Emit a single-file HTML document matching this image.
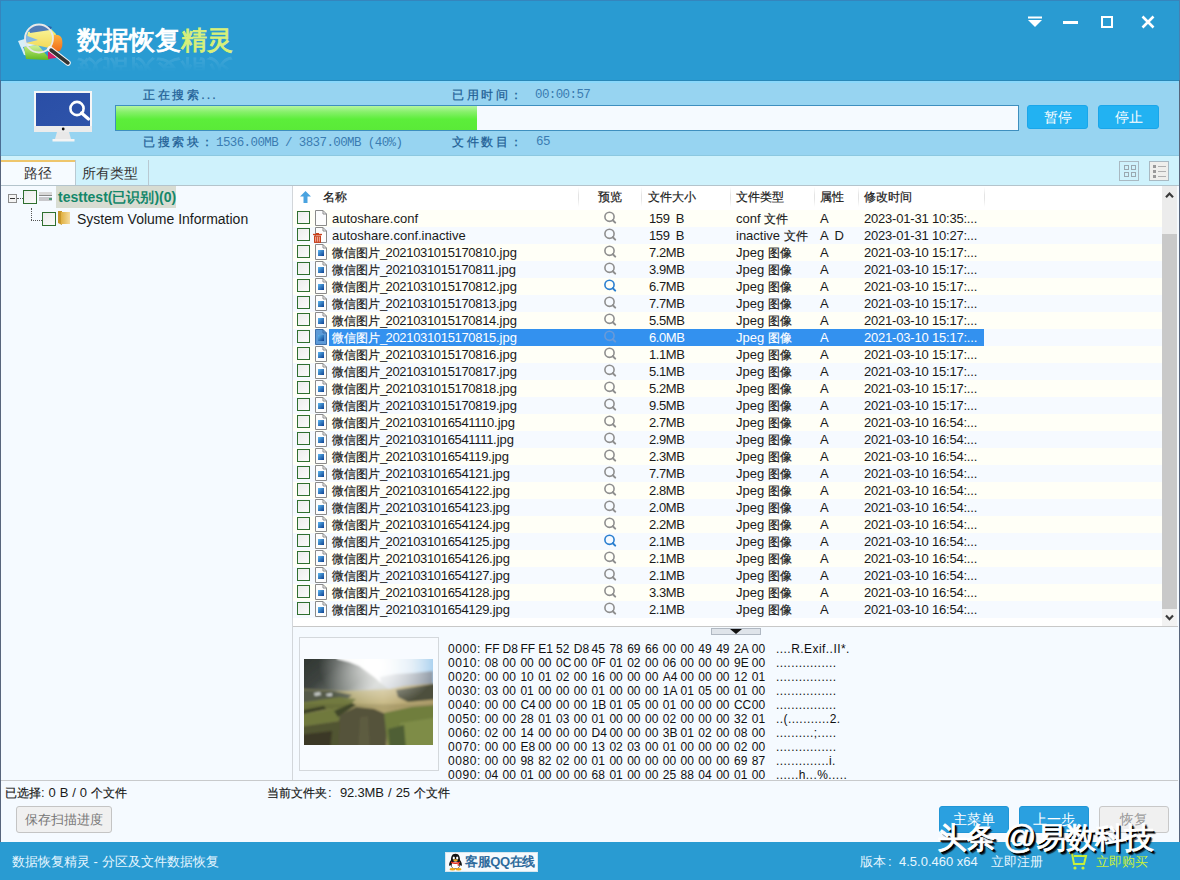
<!DOCTYPE html><html><head><meta charset="utf-8"><style>
*{margin:0;padding:0;box-sizing:border-box}
html,body{width:1180px;height:880px;overflow:hidden;background:#f5faff}
body{position:relative;font-family:"Liberation Sans",sans-serif;color:#1a1a1a}
.ab{position:absolute}
.t{position:absolute;white-space:pre;line-height:17px}
.chk{position:absolute;width:13px;height:13px;border:1px solid #2f6f2f;background:linear-gradient(135deg,#ececec,#fbfbfb)}
.c{font-size:12px;-webkit-text-stroke:0.2px currentColor}
.row{position:absolute;left:293px;width:869px;height:17px}
.cell{position:absolute;top:0;white-space:pre;font-size:13px;line-height:17px}
.hdr{position:absolute;top:0;white-space:pre;font-size:13px;line-height:22px;color:#1a1a1a}
.sep{position:absolute;top:1px;width:1px;height:20px;background:linear-gradient(#fff,#e4e4e4 40%,#e4e4e4 60%,#fff)}
.serif{font-family:"Liberation Serif",serif;color:#1f5f96;font-size:12px;letter-spacing:2.6px;-webkit-text-stroke:0.25px #1f5f96}
.btnb{position:absolute;background:#22b2f2;border:1px solid #1aa6ea;border-radius:3px;color:#fff;font-size:14px;text-align:center}
.hb{display:inline-block;width:17.8px}
.hex{position:absolute;left:448px;white-space:pre;font-size:12px;line-height:14px;color:#101010}
</style></head><body>
<div class="ab" style="left:0;top:0;width:1180px;height:80px;background:#299bd2"></div>
<div class="ab" style="left:0;top:80px;width:1180px;height:76px;background:#97d4f1;border-bottom:1px solid #8cc8e0"></div>
<div class="ab" style="left:0;top:80px;width:1180px;height:1px;background:#2a88b8"></div>
<div class="ab" style="left:0;top:81px;width:1180px;height:2px;background:#8ad8fb"></div>
<div class="ab" style="left:0;top:156px;width:1180px;height:30px;background:#cff2fc;border-bottom:1px solid #b4c4cc"></div>
<div class="ab" style="left:0;top:0;width:1180px;height:1px;background:#3585bd"></div>
<div class="ab" style="left:0;top:0;width:1px;height:80px;background:#3585bd"></div>
<div class="ab" style="left:0;top:80px;width:1px;height:76px;background:#4a6e94"></div>
<div class="ab" style="left:0;top:156px;width:1px;height:686px;background:#58657c"></div>
<div class="ab" style="left:0;top:842px;width:1px;height:38px;background:#3585bd"></div>
<div class="ab" style="left:1179px;top:0;width:1px;height:80px;background:#4a7fb0"></div>
<div class="ab" style="left:1179px;top:80px;width:1px;height:762px;background:#58657c"></div>
<div class="ab" style="left:1179px;top:842px;width:1px;height:38px;background:#3a88c0"></div>
<svg class="ab" style="left:10px;top:15px" width="70" height="60" viewBox="0 0 70 60">
<defs>
<linearGradient id="lg1" x1="0" y1="0" x2="0" y2="1"><stop offset="0" stop-color="#f8f080"/><stop offset="1" stop-color="#f0d030"/></linearGradient>
<linearGradient id="lg2" x1="0" y1="0" x2="0" y2="1"><stop offset="0" stop-color="#c8f080"/><stop offset="1" stop-color="#60b820"/></linearGradient>
<linearGradient id="lg3" x1="0" y1="0" x2="0" y2="1"><stop offset="0" stop-color="#ffb040"/><stop offset="1" stop-color="#f06818"/></linearGradient>
</defs>
<path d="M8 26 L28 20 L26 42 L14 40 Z" fill="#d8eef8"/>
<path d="M13 32 L28 30 L40 44 L36 44 L18 44 Z" fill="#3a8ac8"/>
<path d="M14 32 L28 30 L40 44 L38 45 L16 44 Z" fill="url(#lg2)"/>
<path d="M18 17 L41 14 L46 19 L44 34 L30 31 L16 28 Z" fill="url(#lg1)"/><path d="M15 20 L28 25 L16 28 Z" fill="#6aa8e0"/>
<path d="M19 12 Q30 8 42 12 L40 15 L20 18Z" fill="#2a5ea8"/>
<path d="M44 20 Q50 19 52 24 Q53.5 31 50 36 L44 37 L41 30 Z" fill="url(#lg3)"/>
<path d="M38 37 L46 36 L46 43 L38 44 Z" fill="#d0206a"/>
<circle cx="29" cy="23.5" r="14" fill="#ffffff" fill-opacity="0.18" stroke="#e8e8e8" stroke-width="1.8"/>
<path d="M40 34 L58 48" stroke="#f4f4f4" stroke-width="5.5" stroke-linecap="round"/>
<path d="M41 35 L58 48" stroke="#333" stroke-width="3.5" stroke-linecap="round"/>
</svg>
<div class="ab" style="left:77px;top:25px;font-size:26px;line-height:30px;font-weight:normal;color:#fff;-webkit-text-stroke:0.9px #fff;white-space:pre">数据恢复<span style="color:#d8f07a;-webkit-text-stroke:0.9px #d8f07a">精灵</span></div>
<div class="ab" style="left:77px;top:25px;width:160px;height:30px;transform:scaleY(-1);transform-origin:0 30px;overflow:hidden;font-size:26px;line-height:30px;font-weight:normal;-webkit-text-stroke:0.9px #fff;color:#fff;white-space:pre;opacity:0.12;-webkit-mask-image:linear-gradient(to top,rgba(0,0,0,1) 0%,rgba(0,0,0,0) 55%)">数据恢复精灵</div>
<svg class="ab" style="left:1025px;top:14px" width="20" height="16" viewBox="0 0 20 16"><path d="M3 3.5H17" stroke="#fff" stroke-width="2"/><path d="M3 6H17L10 13Z" fill="#fff"/></svg>
<div class="ab" style="left:1063px;top:21px;width:15px;height:3px;background:#fff"></div>
<div class="ab" style="left:1101px;top:16px;width:12px;height:12px;border:2px solid #fff"></div>
<svg class="ab" style="left:1141px;top:15px" width="14" height="14" viewBox="0 0 14 14"><path d="M1.5 1.5L12.5 12.5M12.5 1.5L1.5 12.5" stroke="#fff" stroke-width="2.6"/></svg>
<svg class="ab" style="left:30px;top:88px" width="66" height="56" viewBox="0 0 66 56">
<defs><linearGradient id="scr" x1="0" y1="0" x2="1" y2="1"><stop offset="0" stop-color="#2a4ea6"/><stop offset="1" stop-color="#2e54aa"/></linearGradient></defs>
<rect x="4" y="3" width="58" height="41" fill="#f6f6f6"/>
<rect x="6" y="5" width="54" height="33" fill="url(#scr)"/>
<rect x="4" y="38" width="58" height="6" fill="#ececec"/>
<circle cx="33.2" cy="41" r="1.4" fill="#111"/>
<path d="M27 44 H39 L41 51 H25Z" fill="#e8e8e8"/>
<rect x="22.5" y="51" width="22" height="2.5" fill="#f4f4f4"/>
<circle cx="47" cy="20.5" r="6.6" fill="none" stroke="#fff" stroke-width="2.6"/>
<path d="M51.5 25 L58.5 31" stroke="#fff" stroke-width="3.2" stroke-linecap="round"/>
</svg>
<div class="t serif" style="left:143px;top:87px">正在搜索...</div>
<div class="t serif" style="left:452px;top:87px">已用时间：</div>
<div class="t serif" style="left:535px;top:87px;letter-spacing:0;font-family:Liberation Mono,monospace;font-size:12.5px;letter-spacing:-0.6px;-webkit-text-stroke:0;color:#3a7cb2">00:00:57</div>
<div class="t serif" style="left:143px;top:134px">已搜索块：<span style="letter-spacing:0;font-family:Liberation Mono,monospace;font-size:12.5px;letter-spacing:-0.6px;-webkit-text-stroke:0;color:#3a7cb2">1536.00MB / 3837.00MB (40%)</span></div>
<div class="t serif" style="left:452px;top:134px">文件数目：</div>
<div class="t serif" style="left:536px;top:134px;letter-spacing:0;font-family:Liberation Mono,monospace;font-size:12.5px;letter-spacing:-0.6px;-webkit-text-stroke:0;color:#3a7cb2">65</div>
<div class="ab" style="left:115px;top:105px;width:904px;height:26px;background:#f5faff;border:1px solid #3e8fbf"></div>
<div class="ab" style="left:116px;top:106px;width:361px;height:24px;background:linear-gradient(#b4f5a0 0%,#86f06a 25%,#5cee3a 55%,#5aea38 100%)"></div>
<div class="btnb" style="left:1027px;top:105px;width:61px;height:24px;line-height:22px">暂停</div>
<div class="btnb" style="left:1098px;top:105px;width:61px;height:24px;line-height:22px">停止</div>
<div class="ab" style="left:1px;top:160px;width:74px;height:25px;background:#f6fbff;border-top:2px solid #eec66c"></div>
<div class="ab" style="left:75px;top:160px;width:1px;height:25px;background:#b9c9d2"></div>
<div class="ab" style="left:148px;top:160px;width:1px;height:25px;background:#b9c9d2"></div>
<div class="t" style="left:24px;top:163px;font-size:14px;line-height:20px;color:#333">路径</div>
<div class="t" style="left:82px;top:163px;font-size:14px;line-height:20px;color:#333">所有类型</div>
<svg class="ab" style="left:1119px;top:161px" width="22" height="21" viewBox="0 0 22 21"><rect x="0.5" y="0.5" width="19" height="19" fill="none" stroke="#a9b9c2"/><g fill="none" stroke="#9aa8b0"><rect x="5.5" y="4.5" width="4" height="4"/><rect x="12.5" y="4.5" width="4" height="4"/><rect x="5.5" y="11.5" width="4" height="4"/><rect x="12.5" y="11.5" width="4" height="4"/></g></svg>
<svg class="ab" style="left:1149px;top:161px" width="22" height="21" viewBox="0 0 22 21"><rect x="0.5" y="0.5" width="19" height="19" fill="#efefec" stroke="#a9b9c2"/><g fill="#9a9a9a"><rect x="4" y="4" width="3" height="3"/><rect x="4" y="9" width="3" height="3"/><rect x="4" y="14" width="3" height="3"/></g><g stroke="#b0b0b0"><path d="M9 5.5H17M9 10.5H17M9 15.5H17"/></g></svg>
<div class="ab" style="left:292px;top:186px;width:1px;height:595px;background:#d2d6da"></div>
<div class="ab" style="left:8px;top:194px;width:9px;height:9px;border:1px solid #8c8c8c;background:#f4f4f4"></div>
<div class="ab" style="left:10px;top:198px;width:5px;height:1px;background:#333"></div>
<div class="ab" style="left:17px;top:198px;width:6px;height:1px;border-top:1px dotted #555"></div>
<div class="chk" style="left:23px;top:190px;width:14px;height:14px"></div>
<svg class="ab" style="left:38px;top:190px" width="16" height="14" viewBox="0 0 16 14"><rect x="1" y="2" width="13" height="3" fill="#d8d8d8"/><rect x="1" y="7" width="13" height="4" fill="#c8c8cc"/><path d="M1 5.5H14" stroke="#888"/><path d="M14 9H11" stroke="#2a8a5a" stroke-width="1.5"/></svg>
<div class="ab" style="left:56px;top:186px;width:120px;height:22px;background:#d8dcd2"></div>
<div class="t" style="left:58px;top:187px;font-size:14px;line-height:20px;font-weight:bold;color:#14876a">testtest(已识别)(0)</div>
<div class="ab" style="left:31px;top:208px;width:1px;height:12px;border-left:1px dotted #555"></div>
<div class="ab" style="left:31px;top:220px;width:11px;height:1px;border-top:1px dotted #555"></div>
<div class="chk" style="left:42px;top:212px;width:14px;height:14px"></div>
<svg class="ab" style="left:57px;top:210px" width="14" height="16" viewBox="0 0 14 16"><defs><linearGradient id="fd" x1="0" x2="1"><stop offset="0" stop-color="#e0b040"/><stop offset="1" stop-color="#f5dca0"/></linearGradient></defs><path d="M1 1H5L5 15L1 13Z" fill="#c8962a"/><rect x="4" y="2" width="9" height="12" fill="url(#fd)"/></svg>
<div class="t" style="left:77px;top:209px;font-size:14px;line-height:20px;color:#1a1a1a">System Volume Information</div>
<div class="ab" style="left:293px;top:186px;width:869px;height:440px;background:#fff"></div>
<div class="ab" style="left:293px;top:186px;width:869px;height:22px;background:#fff">
<svg class="ab" style="left:7px;top:5px" width="11" height="12" viewBox="0 0 11 12"><path d="M5.5 0L11 5.5H7.5V12H3.5V5.5H0Z" fill="#4aa3e0"/></svg>
<div class="hdr" style="left:30px"><span class="c">名称</span></div>
<div class="hdr" style="left:305px"><span class="c">预览</span></div>
<div class="hdr" style="left:355px"><span class="c">文件大小</span></div>
<div class="hdr" style="left:443px"><span class="c">文件类型</span></div>
<div class="hdr" style="left:527px"><span class="c">属性</span></div>
<div class="hdr" style="left:571px"><span class="c">修改时间</span></div>
<div class="sep" style="left:285px"></div>
<div class="sep" style="left:348px"></div>
<div class="sep" style="left:437px"></div>
<div class="sep" style="left:521px"></div>
<div class="sep" style="left:565px"></div>
<div class="sep" style="left:691px"></div>
</div>
<div class="row" style="top:210px;background:#fffff7">
<div class="chk" style="left:4px;top:1px"></div>
<svg class="ab" style="left:22px;top:0px" width="13" height="17" viewBox="0 0 13 17"><path d="M0.5 0.5H8L11.5 4V15.5H0.5Z" fill="#fdfdfd" stroke="#8a8a8a"/><path d="M8 0.5V4H11.5" fill="none" stroke="#8a8a8a"/></svg>
<div class="cell" style="left:39px;color:#1a1a1a">autoshare.conf</div>
<svg class="ab" style="left:310px;top:1px" width="14" height="14" viewBox="0 0 14 14"><circle cx="6.5" cy="5.8" r="4.6" fill="none" stroke="#8e8e8e" stroke-width="1.6"/><path d="M9.8 9.2L12.2 11.6" stroke="#8e8e8e" stroke-width="2" stroke-linecap="round"/></svg>
<div class="cell" style="left:356px;color:#1a1a1a;letter-spacing:-0.4px;word-spacing:3px">159 B</div>
<div class="cell" style="left:443px;color:#1a1a1a">conf <span class="c">文件</span></div>
<div class="cell" style="left:527px;color:#1a1a1a;word-spacing:3px">A</div>
<div class="cell" style="left:571px;color:#1a1a1a;letter-spacing:-0.2px">2023-01-31 10:35:...</div>
</div>
<div class="row" style="top:227px;background:#f6faff">
<div class="chk" style="left:4px;top:1px"></div>
<svg class="ab" style="left:22px;top:0px" width="13" height="17" viewBox="0 0 13 17"><path d="M0.5 0.5H8L11.5 4V15.5H0.5Z" fill="#fdfdfd" stroke="#8a8a8a"/><path d="M8 0.5V4H11.5" fill="none" stroke="#8a8a8a"/></svg><svg class="ab" style="left:20px;top:5px" width="10" height="11" viewBox="0 0 10 11"><path d="M0 2.5H9" stroke="#c8401c" stroke-width="1.3"/><rect x="3" y="1" width="3" height="1.2" fill="#c8401c"/><rect x="1.6" y="4.1" width="5.8" height="6.2" fill="#f6b8a8" stroke="#c8401c" stroke-width="1.2"/><path d="M3.6 4.5V10M5.4 4.5V10" stroke="#c8401c" stroke-width="0.9"/></svg>
<div class="cell" style="left:39px;color:#1a1a1a">autoshare.conf.inactive</div>
<svg class="ab" style="left:310px;top:1px" width="14" height="14" viewBox="0 0 14 14"><circle cx="6.5" cy="5.8" r="4.6" fill="none" stroke="#8e8e8e" stroke-width="1.6"/><path d="M9.8 9.2L12.2 11.6" stroke="#8e8e8e" stroke-width="2" stroke-linecap="round"/></svg>
<div class="cell" style="left:356px;color:#1a1a1a;letter-spacing:-0.4px;word-spacing:3px">159 B</div>
<div class="cell" style="left:443px;color:#1a1a1a">inactive <span class="c">文件</span></div>
<div class="cell" style="left:527px;color:#1a1a1a;word-spacing:3px">A D</div>
<div class="cell" style="left:571px;color:#1a1a1a;letter-spacing:-0.2px">2023-01-31 10:27:...</div>
</div>
<div class="row" style="top:244px;background:#fffff7">
<div class="chk" style="left:4px;top:1px"></div>
<svg class="ab" style="left:22px;top:0px" width="13" height="17" viewBox="0 0 13 17"><path d="M0.5 0.5H8L11.5 4V15.5H0.5Z" fill="#fdfdfd" stroke="#8a8a8a"/><path d="M8 0.5V4H11.5" fill="none" stroke="#8a8a8a"/><defs><linearGradient id="jg" x1="0" y1="0" x2="1" y2="1"><stop offset="0" stop-color="#5db8f0"/><stop offset="1" stop-color="#0d3f8f"/></linearGradient></defs><rect x="3" y="6" width="6" height="6" fill="url(#jg)"/></svg>
<div class="cell" style="left:39px;color:#1a1a1a"><span class="c">微信图片</span><span style="letter-spacing:-1.7px">_</span><span style="letter-spacing:-0.33px">2021031015170810</span>.jpg</div>
<svg class="ab" style="left:310px;top:1px" width="14" height="14" viewBox="0 0 14 14"><circle cx="6.5" cy="5.8" r="4.6" fill="none" stroke="#8e8e8e" stroke-width="1.6"/><path d="M9.8 9.2L12.2 11.6" stroke="#8e8e8e" stroke-width="2" stroke-linecap="round"/></svg>
<div class="cell" style="left:356px;color:#1a1a1a;letter-spacing:-0.4px;word-spacing:3px">7.2MB</div>
<div class="cell" style="left:443px;color:#1a1a1a">Jpeg <span class="c">图像</span></div>
<div class="cell" style="left:527px;color:#1a1a1a;word-spacing:3px">A</div>
<div class="cell" style="left:571px;color:#1a1a1a;letter-spacing:-0.2px">2021-03-10 15:17:...</div>
</div>
<div class="row" style="top:261px;background:#f6faff">
<div class="chk" style="left:4px;top:1px"></div>
<svg class="ab" style="left:22px;top:0px" width="13" height="17" viewBox="0 0 13 17"><path d="M0.5 0.5H8L11.5 4V15.5H0.5Z" fill="#fdfdfd" stroke="#8a8a8a"/><path d="M8 0.5V4H11.5" fill="none" stroke="#8a8a8a"/><defs><linearGradient id="jg" x1="0" y1="0" x2="1" y2="1"><stop offset="0" stop-color="#5db8f0"/><stop offset="1" stop-color="#0d3f8f"/></linearGradient></defs><rect x="3" y="6" width="6" height="6" fill="url(#jg)"/></svg>
<div class="cell" style="left:39px;color:#1a1a1a"><span class="c">微信图片</span><span style="letter-spacing:-1.7px">_</span><span style="letter-spacing:-0.33px">2021031015170811</span>.jpg</div>
<svg class="ab" style="left:310px;top:1px" width="14" height="14" viewBox="0 0 14 14"><circle cx="6.5" cy="5.8" r="4.6" fill="none" stroke="#8e8e8e" stroke-width="1.6"/><path d="M9.8 9.2L12.2 11.6" stroke="#8e8e8e" stroke-width="2" stroke-linecap="round"/></svg>
<div class="cell" style="left:356px;color:#1a1a1a;letter-spacing:-0.4px;word-spacing:3px">3.9MB</div>
<div class="cell" style="left:443px;color:#1a1a1a">Jpeg <span class="c">图像</span></div>
<div class="cell" style="left:527px;color:#1a1a1a;word-spacing:3px">A</div>
<div class="cell" style="left:571px;color:#1a1a1a;letter-spacing:-0.2px">2021-03-10 15:17:...</div>
</div>
<div class="row" style="top:278px;background:#fffff7">
<div class="chk" style="left:4px;top:1px"></div>
<svg class="ab" style="left:22px;top:0px" width="13" height="17" viewBox="0 0 13 17"><path d="M0.5 0.5H8L11.5 4V15.5H0.5Z" fill="#fdfdfd" stroke="#8a8a8a"/><path d="M8 0.5V4H11.5" fill="none" stroke="#8a8a8a"/><defs><linearGradient id="jg" x1="0" y1="0" x2="1" y2="1"><stop offset="0" stop-color="#5db8f0"/><stop offset="1" stop-color="#0d3f8f"/></linearGradient></defs><rect x="3" y="6" width="6" height="6" fill="url(#jg)"/></svg>
<div class="cell" style="left:39px;color:#1a1a1a"><span class="c">微信图片</span><span style="letter-spacing:-1.7px">_</span><span style="letter-spacing:-0.33px">2021031015170812</span>.jpg</div>
<svg class="ab" style="left:310px;top:1px" width="14" height="14" viewBox="0 0 14 14"><circle cx="6.5" cy="5.8" r="4.6" fill="none" stroke="#2a7fd0" stroke-width="1.6"/><path d="M9.8 9.2L12.2 11.6" stroke="#2a7fd0" stroke-width="2" stroke-linecap="round"/></svg>
<div class="cell" style="left:356px;color:#1a1a1a;letter-spacing:-0.4px;word-spacing:3px">6.7MB</div>
<div class="cell" style="left:443px;color:#1a1a1a">Jpeg <span class="c">图像</span></div>
<div class="cell" style="left:527px;color:#1a1a1a;word-spacing:3px">A</div>
<div class="cell" style="left:571px;color:#1a1a1a;letter-spacing:-0.2px">2021-03-10 15:17:...</div>
</div>
<div class="row" style="top:295px;background:#f6faff">
<div class="chk" style="left:4px;top:1px"></div>
<svg class="ab" style="left:22px;top:0px" width="13" height="17" viewBox="0 0 13 17"><path d="M0.5 0.5H8L11.5 4V15.5H0.5Z" fill="#fdfdfd" stroke="#8a8a8a"/><path d="M8 0.5V4H11.5" fill="none" stroke="#8a8a8a"/><defs><linearGradient id="jg" x1="0" y1="0" x2="1" y2="1"><stop offset="0" stop-color="#5db8f0"/><stop offset="1" stop-color="#0d3f8f"/></linearGradient></defs><rect x="3" y="6" width="6" height="6" fill="url(#jg)"/></svg>
<div class="cell" style="left:39px;color:#1a1a1a"><span class="c">微信图片</span><span style="letter-spacing:-1.7px">_</span><span style="letter-spacing:-0.33px">2021031015170813</span>.jpg</div>
<svg class="ab" style="left:310px;top:1px" width="14" height="14" viewBox="0 0 14 14"><circle cx="6.5" cy="5.8" r="4.6" fill="none" stroke="#8e8e8e" stroke-width="1.6"/><path d="M9.8 9.2L12.2 11.6" stroke="#8e8e8e" stroke-width="2" stroke-linecap="round"/></svg>
<div class="cell" style="left:356px;color:#1a1a1a;letter-spacing:-0.4px;word-spacing:3px">7.7MB</div>
<div class="cell" style="left:443px;color:#1a1a1a">Jpeg <span class="c">图像</span></div>
<div class="cell" style="left:527px;color:#1a1a1a;word-spacing:3px">A</div>
<div class="cell" style="left:571px;color:#1a1a1a;letter-spacing:-0.2px">2021-03-10 15:17:...</div>
</div>
<div class="row" style="top:312px;background:#fffff7">
<div class="chk" style="left:4px;top:1px"></div>
<svg class="ab" style="left:22px;top:0px" width="13" height="17" viewBox="0 0 13 17"><path d="M0.5 0.5H8L11.5 4V15.5H0.5Z" fill="#fdfdfd" stroke="#8a8a8a"/><path d="M8 0.5V4H11.5" fill="none" stroke="#8a8a8a"/><defs><linearGradient id="jg" x1="0" y1="0" x2="1" y2="1"><stop offset="0" stop-color="#5db8f0"/><stop offset="1" stop-color="#0d3f8f"/></linearGradient></defs><rect x="3" y="6" width="6" height="6" fill="url(#jg)"/></svg>
<div class="cell" style="left:39px;color:#1a1a1a"><span class="c">微信图片</span><span style="letter-spacing:-1.7px">_</span><span style="letter-spacing:-0.33px">2021031015170814</span>.jpg</div>
<svg class="ab" style="left:310px;top:1px" width="14" height="14" viewBox="0 0 14 14"><circle cx="6.5" cy="5.8" r="4.6" fill="none" stroke="#8e8e8e" stroke-width="1.6"/><path d="M9.8 9.2L12.2 11.6" stroke="#8e8e8e" stroke-width="2" stroke-linecap="round"/></svg>
<div class="cell" style="left:356px;color:#1a1a1a;letter-spacing:-0.4px;word-spacing:3px">5.5MB</div>
<div class="cell" style="left:443px;color:#1a1a1a">Jpeg <span class="c">图像</span></div>
<div class="cell" style="left:527px;color:#1a1a1a;word-spacing:3px">A</div>
<div class="cell" style="left:571px;color:#1a1a1a;letter-spacing:-0.2px">2021-03-10 15:17:...</div>
</div>
<div class="row" style="top:329px;background:#f6faff">
<div class="ab" style="left:36px;top:0;width:655px;height:17px;background:#3391ef"></div>
<div class="chk" style="left:4px;top:1px"></div>
<svg class="ab" style="left:22px;top:0px" width="13" height="17" viewBox="0 0 13 17"><path d="M0.5 0.5H8L11.5 4V15.5H0.5Z" fill="#5c9ad8" stroke="#3d6fa8"/><path d="M8 0.5V4H11.5" fill="none" stroke="#3d6fa8"/><defs><linearGradient id="jg" x1="0" y1="0" x2="1" y2="1"><stop offset="0" stop-color="#5db8f0"/><stop offset="1" stop-color="#0d3f8f"/></linearGradient></defs><rect x="3" y="6" width="6" height="6" fill="url(#jg)"/></svg>
<div class="cell" style="left:39px;color:#fff"><span class="c">微信图片</span><span style="letter-spacing:-1.7px">_</span><span style="letter-spacing:-0.33px">2021031015170815</span>.jpg</div>
<svg class="ab" style="left:310px;top:1px" width="14" height="14" viewBox="0 0 14 14"><circle cx="6.5" cy="5.8" r="4.6" fill="none" stroke="#6a9ad8" stroke-width="1.6"/><path d="M9.8 9.2L12.2 11.6" stroke="#6a9ad8" stroke-width="2" stroke-linecap="round"/></svg>
<div class="cell" style="left:356px;color:#fff;letter-spacing:-0.4px;word-spacing:3px">6.0MB</div>
<div class="cell" style="left:443px;color:#fff">Jpeg <span class="c">图像</span></div>
<div class="cell" style="left:527px;color:#fff;word-spacing:3px">A</div>
<div class="cell" style="left:571px;color:#fff;letter-spacing:-0.2px">2021-03-10 15:17:...</div>
</div>
<div class="row" style="top:346px;background:#fffff7">
<div class="chk" style="left:4px;top:1px"></div>
<svg class="ab" style="left:22px;top:0px" width="13" height="17" viewBox="0 0 13 17"><path d="M0.5 0.5H8L11.5 4V15.5H0.5Z" fill="#fdfdfd" stroke="#8a8a8a"/><path d="M8 0.5V4H11.5" fill="none" stroke="#8a8a8a"/><defs><linearGradient id="jg" x1="0" y1="0" x2="1" y2="1"><stop offset="0" stop-color="#5db8f0"/><stop offset="1" stop-color="#0d3f8f"/></linearGradient></defs><rect x="3" y="6" width="6" height="6" fill="url(#jg)"/></svg>
<div class="cell" style="left:39px;color:#1a1a1a"><span class="c">微信图片</span><span style="letter-spacing:-1.7px">_</span><span style="letter-spacing:-0.33px">2021031015170816</span>.jpg</div>
<svg class="ab" style="left:310px;top:1px" width="14" height="14" viewBox="0 0 14 14"><circle cx="6.5" cy="5.8" r="4.6" fill="none" stroke="#8e8e8e" stroke-width="1.6"/><path d="M9.8 9.2L12.2 11.6" stroke="#8e8e8e" stroke-width="2" stroke-linecap="round"/></svg>
<div class="cell" style="left:356px;color:#1a1a1a;letter-spacing:-0.4px;word-spacing:3px">1.1MB</div>
<div class="cell" style="left:443px;color:#1a1a1a">Jpeg <span class="c">图像</span></div>
<div class="cell" style="left:527px;color:#1a1a1a;word-spacing:3px">A</div>
<div class="cell" style="left:571px;color:#1a1a1a;letter-spacing:-0.2px">2021-03-10 15:17:...</div>
</div>
<div class="row" style="top:363px;background:#f6faff">
<div class="chk" style="left:4px;top:1px"></div>
<svg class="ab" style="left:22px;top:0px" width="13" height="17" viewBox="0 0 13 17"><path d="M0.5 0.5H8L11.5 4V15.5H0.5Z" fill="#fdfdfd" stroke="#8a8a8a"/><path d="M8 0.5V4H11.5" fill="none" stroke="#8a8a8a"/><defs><linearGradient id="jg" x1="0" y1="0" x2="1" y2="1"><stop offset="0" stop-color="#5db8f0"/><stop offset="1" stop-color="#0d3f8f"/></linearGradient></defs><rect x="3" y="6" width="6" height="6" fill="url(#jg)"/></svg>
<div class="cell" style="left:39px;color:#1a1a1a"><span class="c">微信图片</span><span style="letter-spacing:-1.7px">_</span><span style="letter-spacing:-0.33px">2021031015170817</span>.jpg</div>
<svg class="ab" style="left:310px;top:1px" width="14" height="14" viewBox="0 0 14 14"><circle cx="6.5" cy="5.8" r="4.6" fill="none" stroke="#8e8e8e" stroke-width="1.6"/><path d="M9.8 9.2L12.2 11.6" stroke="#8e8e8e" stroke-width="2" stroke-linecap="round"/></svg>
<div class="cell" style="left:356px;color:#1a1a1a;letter-spacing:-0.4px;word-spacing:3px">5.1MB</div>
<div class="cell" style="left:443px;color:#1a1a1a">Jpeg <span class="c">图像</span></div>
<div class="cell" style="left:527px;color:#1a1a1a;word-spacing:3px">A</div>
<div class="cell" style="left:571px;color:#1a1a1a;letter-spacing:-0.2px">2021-03-10 15:17:...</div>
</div>
<div class="row" style="top:380px;background:#fffff7">
<div class="chk" style="left:4px;top:1px"></div>
<svg class="ab" style="left:22px;top:0px" width="13" height="17" viewBox="0 0 13 17"><path d="M0.5 0.5H8L11.5 4V15.5H0.5Z" fill="#fdfdfd" stroke="#8a8a8a"/><path d="M8 0.5V4H11.5" fill="none" stroke="#8a8a8a"/><defs><linearGradient id="jg" x1="0" y1="0" x2="1" y2="1"><stop offset="0" stop-color="#5db8f0"/><stop offset="1" stop-color="#0d3f8f"/></linearGradient></defs><rect x="3" y="6" width="6" height="6" fill="url(#jg)"/></svg>
<div class="cell" style="left:39px;color:#1a1a1a"><span class="c">微信图片</span><span style="letter-spacing:-1.7px">_</span><span style="letter-spacing:-0.33px">2021031015170818</span>.jpg</div>
<svg class="ab" style="left:310px;top:1px" width="14" height="14" viewBox="0 0 14 14"><circle cx="6.5" cy="5.8" r="4.6" fill="none" stroke="#8e8e8e" stroke-width="1.6"/><path d="M9.8 9.2L12.2 11.6" stroke="#8e8e8e" stroke-width="2" stroke-linecap="round"/></svg>
<div class="cell" style="left:356px;color:#1a1a1a;letter-spacing:-0.4px;word-spacing:3px">5.2MB</div>
<div class="cell" style="left:443px;color:#1a1a1a">Jpeg <span class="c">图像</span></div>
<div class="cell" style="left:527px;color:#1a1a1a;word-spacing:3px">A</div>
<div class="cell" style="left:571px;color:#1a1a1a;letter-spacing:-0.2px">2021-03-10 15:17:...</div>
</div>
<div class="row" style="top:397px;background:#f6faff">
<div class="chk" style="left:4px;top:1px"></div>
<svg class="ab" style="left:22px;top:0px" width="13" height="17" viewBox="0 0 13 17"><path d="M0.5 0.5H8L11.5 4V15.5H0.5Z" fill="#fdfdfd" stroke="#8a8a8a"/><path d="M8 0.5V4H11.5" fill="none" stroke="#8a8a8a"/><defs><linearGradient id="jg" x1="0" y1="0" x2="1" y2="1"><stop offset="0" stop-color="#5db8f0"/><stop offset="1" stop-color="#0d3f8f"/></linearGradient></defs><rect x="3" y="6" width="6" height="6" fill="url(#jg)"/></svg>
<div class="cell" style="left:39px;color:#1a1a1a"><span class="c">微信图片</span><span style="letter-spacing:-1.7px">_</span><span style="letter-spacing:-0.33px">2021031015170819</span>.jpg</div>
<svg class="ab" style="left:310px;top:1px" width="14" height="14" viewBox="0 0 14 14"><circle cx="6.5" cy="5.8" r="4.6" fill="none" stroke="#8e8e8e" stroke-width="1.6"/><path d="M9.8 9.2L12.2 11.6" stroke="#8e8e8e" stroke-width="2" stroke-linecap="round"/></svg>
<div class="cell" style="left:356px;color:#1a1a1a;letter-spacing:-0.4px;word-spacing:3px">9.5MB</div>
<div class="cell" style="left:443px;color:#1a1a1a">Jpeg <span class="c">图像</span></div>
<div class="cell" style="left:527px;color:#1a1a1a;word-spacing:3px">A</div>
<div class="cell" style="left:571px;color:#1a1a1a;letter-spacing:-0.2px">2021-03-10 15:17:...</div>
</div>
<div class="row" style="top:414px;background:#fffff7">
<div class="chk" style="left:4px;top:1px"></div>
<svg class="ab" style="left:22px;top:0px" width="13" height="17" viewBox="0 0 13 17"><path d="M0.5 0.5H8L11.5 4V15.5H0.5Z" fill="#fdfdfd" stroke="#8a8a8a"/><path d="M8 0.5V4H11.5" fill="none" stroke="#8a8a8a"/><defs><linearGradient id="jg" x1="0" y1="0" x2="1" y2="1"><stop offset="0" stop-color="#5db8f0"/><stop offset="1" stop-color="#0d3f8f"/></linearGradient></defs><rect x="3" y="6" width="6" height="6" fill="url(#jg)"/></svg>
<div class="cell" style="left:39px;color:#1a1a1a"><span class="c">微信图片</span><span style="letter-spacing:-1.7px">_</span><span style="letter-spacing:-0.33px">2021031016541110</span>.jpg</div>
<svg class="ab" style="left:310px;top:1px" width="14" height="14" viewBox="0 0 14 14"><circle cx="6.5" cy="5.8" r="4.6" fill="none" stroke="#8e8e8e" stroke-width="1.6"/><path d="M9.8 9.2L12.2 11.6" stroke="#8e8e8e" stroke-width="2" stroke-linecap="round"/></svg>
<div class="cell" style="left:356px;color:#1a1a1a;letter-spacing:-0.4px;word-spacing:3px">2.7MB</div>
<div class="cell" style="left:443px;color:#1a1a1a">Jpeg <span class="c">图像</span></div>
<div class="cell" style="left:527px;color:#1a1a1a;word-spacing:3px">A</div>
<div class="cell" style="left:571px;color:#1a1a1a;letter-spacing:-0.2px">2021-03-10 16:54:...</div>
</div>
<div class="row" style="top:431px;background:#f6faff">
<div class="chk" style="left:4px;top:1px"></div>
<svg class="ab" style="left:22px;top:0px" width="13" height="17" viewBox="0 0 13 17"><path d="M0.5 0.5H8L11.5 4V15.5H0.5Z" fill="#fdfdfd" stroke="#8a8a8a"/><path d="M8 0.5V4H11.5" fill="none" stroke="#8a8a8a"/><defs><linearGradient id="jg" x1="0" y1="0" x2="1" y2="1"><stop offset="0" stop-color="#5db8f0"/><stop offset="1" stop-color="#0d3f8f"/></linearGradient></defs><rect x="3" y="6" width="6" height="6" fill="url(#jg)"/></svg>
<div class="cell" style="left:39px;color:#1a1a1a"><span class="c">微信图片</span><span style="letter-spacing:-1.7px">_</span><span style="letter-spacing:-0.33px">2021031016541111</span>.jpg</div>
<svg class="ab" style="left:310px;top:1px" width="14" height="14" viewBox="0 0 14 14"><circle cx="6.5" cy="5.8" r="4.6" fill="none" stroke="#8e8e8e" stroke-width="1.6"/><path d="M9.8 9.2L12.2 11.6" stroke="#8e8e8e" stroke-width="2" stroke-linecap="round"/></svg>
<div class="cell" style="left:356px;color:#1a1a1a;letter-spacing:-0.4px;word-spacing:3px">2.9MB</div>
<div class="cell" style="left:443px;color:#1a1a1a">Jpeg <span class="c">图像</span></div>
<div class="cell" style="left:527px;color:#1a1a1a;word-spacing:3px">A</div>
<div class="cell" style="left:571px;color:#1a1a1a;letter-spacing:-0.2px">2021-03-10 16:54:...</div>
</div>
<div class="row" style="top:448px;background:#fffff7">
<div class="chk" style="left:4px;top:1px"></div>
<svg class="ab" style="left:22px;top:0px" width="13" height="17" viewBox="0 0 13 17"><path d="M0.5 0.5H8L11.5 4V15.5H0.5Z" fill="#fdfdfd" stroke="#8a8a8a"/><path d="M8 0.5V4H11.5" fill="none" stroke="#8a8a8a"/><defs><linearGradient id="jg" x1="0" y1="0" x2="1" y2="1"><stop offset="0" stop-color="#5db8f0"/><stop offset="1" stop-color="#0d3f8f"/></linearGradient></defs><rect x="3" y="6" width="6" height="6" fill="url(#jg)"/></svg>
<div class="cell" style="left:39px;color:#1a1a1a"><span class="c">微信图片</span><span style="letter-spacing:-1.7px">_</span><span style="letter-spacing:-0.33px">202103101654119</span>.jpg</div>
<svg class="ab" style="left:310px;top:1px" width="14" height="14" viewBox="0 0 14 14"><circle cx="6.5" cy="5.8" r="4.6" fill="none" stroke="#8e8e8e" stroke-width="1.6"/><path d="M9.8 9.2L12.2 11.6" stroke="#8e8e8e" stroke-width="2" stroke-linecap="round"/></svg>
<div class="cell" style="left:356px;color:#1a1a1a;letter-spacing:-0.4px;word-spacing:3px">2.3MB</div>
<div class="cell" style="left:443px;color:#1a1a1a">Jpeg <span class="c">图像</span></div>
<div class="cell" style="left:527px;color:#1a1a1a;word-spacing:3px">A</div>
<div class="cell" style="left:571px;color:#1a1a1a;letter-spacing:-0.2px">2021-03-10 16:54:...</div>
</div>
<div class="row" style="top:465px;background:#f6faff">
<div class="chk" style="left:4px;top:1px"></div>
<svg class="ab" style="left:22px;top:0px" width="13" height="17" viewBox="0 0 13 17"><path d="M0.5 0.5H8L11.5 4V15.5H0.5Z" fill="#fdfdfd" stroke="#8a8a8a"/><path d="M8 0.5V4H11.5" fill="none" stroke="#8a8a8a"/><defs><linearGradient id="jg" x1="0" y1="0" x2="1" y2="1"><stop offset="0" stop-color="#5db8f0"/><stop offset="1" stop-color="#0d3f8f"/></linearGradient></defs><rect x="3" y="6" width="6" height="6" fill="url(#jg)"/></svg>
<div class="cell" style="left:39px;color:#1a1a1a"><span class="c">微信图片</span><span style="letter-spacing:-1.7px">_</span><span style="letter-spacing:-0.33px">202103101654121</span>.jpg</div>
<svg class="ab" style="left:310px;top:1px" width="14" height="14" viewBox="0 0 14 14"><circle cx="6.5" cy="5.8" r="4.6" fill="none" stroke="#8e8e8e" stroke-width="1.6"/><path d="M9.8 9.2L12.2 11.6" stroke="#8e8e8e" stroke-width="2" stroke-linecap="round"/></svg>
<div class="cell" style="left:356px;color:#1a1a1a;letter-spacing:-0.4px;word-spacing:3px">7.7MB</div>
<div class="cell" style="left:443px;color:#1a1a1a">Jpeg <span class="c">图像</span></div>
<div class="cell" style="left:527px;color:#1a1a1a;word-spacing:3px">A</div>
<div class="cell" style="left:571px;color:#1a1a1a;letter-spacing:-0.2px">2021-03-10 16:54:...</div>
</div>
<div class="row" style="top:482px;background:#fffff7">
<div class="chk" style="left:4px;top:1px"></div>
<svg class="ab" style="left:22px;top:0px" width="13" height="17" viewBox="0 0 13 17"><path d="M0.5 0.5H8L11.5 4V15.5H0.5Z" fill="#fdfdfd" stroke="#8a8a8a"/><path d="M8 0.5V4H11.5" fill="none" stroke="#8a8a8a"/><defs><linearGradient id="jg" x1="0" y1="0" x2="1" y2="1"><stop offset="0" stop-color="#5db8f0"/><stop offset="1" stop-color="#0d3f8f"/></linearGradient></defs><rect x="3" y="6" width="6" height="6" fill="url(#jg)"/></svg>
<div class="cell" style="left:39px;color:#1a1a1a"><span class="c">微信图片</span><span style="letter-spacing:-1.7px">_</span><span style="letter-spacing:-0.33px">202103101654122</span>.jpg</div>
<svg class="ab" style="left:310px;top:1px" width="14" height="14" viewBox="0 0 14 14"><circle cx="6.5" cy="5.8" r="4.6" fill="none" stroke="#8e8e8e" stroke-width="1.6"/><path d="M9.8 9.2L12.2 11.6" stroke="#8e8e8e" stroke-width="2" stroke-linecap="round"/></svg>
<div class="cell" style="left:356px;color:#1a1a1a;letter-spacing:-0.4px;word-spacing:3px">2.8MB</div>
<div class="cell" style="left:443px;color:#1a1a1a">Jpeg <span class="c">图像</span></div>
<div class="cell" style="left:527px;color:#1a1a1a;word-spacing:3px">A</div>
<div class="cell" style="left:571px;color:#1a1a1a;letter-spacing:-0.2px">2021-03-10 16:54:...</div>
</div>
<div class="row" style="top:499px;background:#f6faff">
<div class="chk" style="left:4px;top:1px"></div>
<svg class="ab" style="left:22px;top:0px" width="13" height="17" viewBox="0 0 13 17"><path d="M0.5 0.5H8L11.5 4V15.5H0.5Z" fill="#fdfdfd" stroke="#8a8a8a"/><path d="M8 0.5V4H11.5" fill="none" stroke="#8a8a8a"/><defs><linearGradient id="jg" x1="0" y1="0" x2="1" y2="1"><stop offset="0" stop-color="#5db8f0"/><stop offset="1" stop-color="#0d3f8f"/></linearGradient></defs><rect x="3" y="6" width="6" height="6" fill="url(#jg)"/></svg>
<div class="cell" style="left:39px;color:#1a1a1a"><span class="c">微信图片</span><span style="letter-spacing:-1.7px">_</span><span style="letter-spacing:-0.33px">202103101654123</span>.jpg</div>
<svg class="ab" style="left:310px;top:1px" width="14" height="14" viewBox="0 0 14 14"><circle cx="6.5" cy="5.8" r="4.6" fill="none" stroke="#8e8e8e" stroke-width="1.6"/><path d="M9.8 9.2L12.2 11.6" stroke="#8e8e8e" stroke-width="2" stroke-linecap="round"/></svg>
<div class="cell" style="left:356px;color:#1a1a1a;letter-spacing:-0.4px;word-spacing:3px">2.0MB</div>
<div class="cell" style="left:443px;color:#1a1a1a">Jpeg <span class="c">图像</span></div>
<div class="cell" style="left:527px;color:#1a1a1a;word-spacing:3px">A</div>
<div class="cell" style="left:571px;color:#1a1a1a;letter-spacing:-0.2px">2021-03-10 16:54:...</div>
</div>
<div class="row" style="top:516px;background:#fffff7">
<div class="chk" style="left:4px;top:1px"></div>
<svg class="ab" style="left:22px;top:0px" width="13" height="17" viewBox="0 0 13 17"><path d="M0.5 0.5H8L11.5 4V15.5H0.5Z" fill="#fdfdfd" stroke="#8a8a8a"/><path d="M8 0.5V4H11.5" fill="none" stroke="#8a8a8a"/><defs><linearGradient id="jg" x1="0" y1="0" x2="1" y2="1"><stop offset="0" stop-color="#5db8f0"/><stop offset="1" stop-color="#0d3f8f"/></linearGradient></defs><rect x="3" y="6" width="6" height="6" fill="url(#jg)"/></svg>
<div class="cell" style="left:39px;color:#1a1a1a"><span class="c">微信图片</span><span style="letter-spacing:-1.7px">_</span><span style="letter-spacing:-0.33px">202103101654124</span>.jpg</div>
<svg class="ab" style="left:310px;top:1px" width="14" height="14" viewBox="0 0 14 14"><circle cx="6.5" cy="5.8" r="4.6" fill="none" stroke="#8e8e8e" stroke-width="1.6"/><path d="M9.8 9.2L12.2 11.6" stroke="#8e8e8e" stroke-width="2" stroke-linecap="round"/></svg>
<div class="cell" style="left:356px;color:#1a1a1a;letter-spacing:-0.4px;word-spacing:3px">2.2MB</div>
<div class="cell" style="left:443px;color:#1a1a1a">Jpeg <span class="c">图像</span></div>
<div class="cell" style="left:527px;color:#1a1a1a;word-spacing:3px">A</div>
<div class="cell" style="left:571px;color:#1a1a1a;letter-spacing:-0.2px">2021-03-10 16:54:...</div>
</div>
<div class="row" style="top:533px;background:#f6faff">
<div class="chk" style="left:4px;top:1px"></div>
<svg class="ab" style="left:22px;top:0px" width="13" height="17" viewBox="0 0 13 17"><path d="M0.5 0.5H8L11.5 4V15.5H0.5Z" fill="#fdfdfd" stroke="#8a8a8a"/><path d="M8 0.5V4H11.5" fill="none" stroke="#8a8a8a"/><defs><linearGradient id="jg" x1="0" y1="0" x2="1" y2="1"><stop offset="0" stop-color="#5db8f0"/><stop offset="1" stop-color="#0d3f8f"/></linearGradient></defs><rect x="3" y="6" width="6" height="6" fill="url(#jg)"/></svg>
<div class="cell" style="left:39px;color:#1a1a1a"><span class="c">微信图片</span><span style="letter-spacing:-1.7px">_</span><span style="letter-spacing:-0.33px">202103101654125</span>.jpg</div>
<svg class="ab" style="left:310px;top:1px" width="14" height="14" viewBox="0 0 14 14"><circle cx="6.5" cy="5.8" r="4.6" fill="none" stroke="#2a7fd0" stroke-width="1.6"/><path d="M9.8 9.2L12.2 11.6" stroke="#2a7fd0" stroke-width="2" stroke-linecap="round"/></svg>
<div class="cell" style="left:356px;color:#1a1a1a;letter-spacing:-0.4px;word-spacing:3px">2.1MB</div>
<div class="cell" style="left:443px;color:#1a1a1a">Jpeg <span class="c">图像</span></div>
<div class="cell" style="left:527px;color:#1a1a1a;word-spacing:3px">A</div>
<div class="cell" style="left:571px;color:#1a1a1a;letter-spacing:-0.2px">2021-03-10 16:54:...</div>
</div>
<div class="row" style="top:550px;background:#fffff7">
<div class="chk" style="left:4px;top:1px"></div>
<svg class="ab" style="left:22px;top:0px" width="13" height="17" viewBox="0 0 13 17"><path d="M0.5 0.5H8L11.5 4V15.5H0.5Z" fill="#fdfdfd" stroke="#8a8a8a"/><path d="M8 0.5V4H11.5" fill="none" stroke="#8a8a8a"/><defs><linearGradient id="jg" x1="0" y1="0" x2="1" y2="1"><stop offset="0" stop-color="#5db8f0"/><stop offset="1" stop-color="#0d3f8f"/></linearGradient></defs><rect x="3" y="6" width="6" height="6" fill="url(#jg)"/></svg>
<div class="cell" style="left:39px;color:#1a1a1a"><span class="c">微信图片</span><span style="letter-spacing:-1.7px">_</span><span style="letter-spacing:-0.33px">202103101654126</span>.jpg</div>
<svg class="ab" style="left:310px;top:1px" width="14" height="14" viewBox="0 0 14 14"><circle cx="6.5" cy="5.8" r="4.6" fill="none" stroke="#8e8e8e" stroke-width="1.6"/><path d="M9.8 9.2L12.2 11.6" stroke="#8e8e8e" stroke-width="2" stroke-linecap="round"/></svg>
<div class="cell" style="left:356px;color:#1a1a1a;letter-spacing:-0.4px;word-spacing:3px">2.1MB</div>
<div class="cell" style="left:443px;color:#1a1a1a">Jpeg <span class="c">图像</span></div>
<div class="cell" style="left:527px;color:#1a1a1a;word-spacing:3px">A</div>
<div class="cell" style="left:571px;color:#1a1a1a;letter-spacing:-0.2px">2021-03-10 16:54:...</div>
</div>
<div class="row" style="top:567px;background:#f6faff">
<div class="chk" style="left:4px;top:1px"></div>
<svg class="ab" style="left:22px;top:0px" width="13" height="17" viewBox="0 0 13 17"><path d="M0.5 0.5H8L11.5 4V15.5H0.5Z" fill="#fdfdfd" stroke="#8a8a8a"/><path d="M8 0.5V4H11.5" fill="none" stroke="#8a8a8a"/><defs><linearGradient id="jg" x1="0" y1="0" x2="1" y2="1"><stop offset="0" stop-color="#5db8f0"/><stop offset="1" stop-color="#0d3f8f"/></linearGradient></defs><rect x="3" y="6" width="6" height="6" fill="url(#jg)"/></svg>
<div class="cell" style="left:39px;color:#1a1a1a"><span class="c">微信图片</span><span style="letter-spacing:-1.7px">_</span><span style="letter-spacing:-0.33px">202103101654127</span>.jpg</div>
<svg class="ab" style="left:310px;top:1px" width="14" height="14" viewBox="0 0 14 14"><circle cx="6.5" cy="5.8" r="4.6" fill="none" stroke="#8e8e8e" stroke-width="1.6"/><path d="M9.8 9.2L12.2 11.6" stroke="#8e8e8e" stroke-width="2" stroke-linecap="round"/></svg>
<div class="cell" style="left:356px;color:#1a1a1a;letter-spacing:-0.4px;word-spacing:3px">2.1MB</div>
<div class="cell" style="left:443px;color:#1a1a1a">Jpeg <span class="c">图像</span></div>
<div class="cell" style="left:527px;color:#1a1a1a;word-spacing:3px">A</div>
<div class="cell" style="left:571px;color:#1a1a1a;letter-spacing:-0.2px">2021-03-10 16:54:...</div>
</div>
<div class="row" style="top:584px;background:#fffff7">
<div class="chk" style="left:4px;top:1px"></div>
<svg class="ab" style="left:22px;top:0px" width="13" height="17" viewBox="0 0 13 17"><path d="M0.5 0.5H8L11.5 4V15.5H0.5Z" fill="#fdfdfd" stroke="#8a8a8a"/><path d="M8 0.5V4H11.5" fill="none" stroke="#8a8a8a"/><defs><linearGradient id="jg" x1="0" y1="0" x2="1" y2="1"><stop offset="0" stop-color="#5db8f0"/><stop offset="1" stop-color="#0d3f8f"/></linearGradient></defs><rect x="3" y="6" width="6" height="6" fill="url(#jg)"/></svg>
<div class="cell" style="left:39px;color:#1a1a1a"><span class="c">微信图片</span><span style="letter-spacing:-1.7px">_</span><span style="letter-spacing:-0.33px">202103101654128</span>.jpg</div>
<svg class="ab" style="left:310px;top:1px" width="14" height="14" viewBox="0 0 14 14"><circle cx="6.5" cy="5.8" r="4.6" fill="none" stroke="#8e8e8e" stroke-width="1.6"/><path d="M9.8 9.2L12.2 11.6" stroke="#8e8e8e" stroke-width="2" stroke-linecap="round"/></svg>
<div class="cell" style="left:356px;color:#1a1a1a;letter-spacing:-0.4px;word-spacing:3px">3.3MB</div>
<div class="cell" style="left:443px;color:#1a1a1a">Jpeg <span class="c">图像</span></div>
<div class="cell" style="left:527px;color:#1a1a1a;word-spacing:3px">A</div>
<div class="cell" style="left:571px;color:#1a1a1a;letter-spacing:-0.2px">2021-03-10 16:54:...</div>
</div>
<div class="row" style="top:601px;background:#f6faff">
<div class="chk" style="left:4px;top:1px"></div>
<svg class="ab" style="left:22px;top:0px" width="13" height="17" viewBox="0 0 13 17"><path d="M0.5 0.5H8L11.5 4V15.5H0.5Z" fill="#fdfdfd" stroke="#8a8a8a"/><path d="M8 0.5V4H11.5" fill="none" stroke="#8a8a8a"/><defs><linearGradient id="jg" x1="0" y1="0" x2="1" y2="1"><stop offset="0" stop-color="#5db8f0"/><stop offset="1" stop-color="#0d3f8f"/></linearGradient></defs><rect x="3" y="6" width="6" height="6" fill="url(#jg)"/></svg>
<div class="cell" style="left:39px;color:#1a1a1a"><span class="c">微信图片</span><span style="letter-spacing:-1.7px">_</span><span style="letter-spacing:-0.33px">202103101654129</span>.jpg</div>
<svg class="ab" style="left:310px;top:1px" width="14" height="14" viewBox="0 0 14 14"><circle cx="6.5" cy="5.8" r="4.6" fill="none" stroke="#8e8e8e" stroke-width="1.6"/><path d="M9.8 9.2L12.2 11.6" stroke="#8e8e8e" stroke-width="2" stroke-linecap="round"/></svg>
<div class="cell" style="left:356px;color:#1a1a1a;letter-spacing:-0.4px;word-spacing:3px">2.1MB</div>
<div class="cell" style="left:443px;color:#1a1a1a">Jpeg <span class="c">图像</span></div>
<div class="cell" style="left:527px;color:#1a1a1a;word-spacing:3px">A</div>
<div class="cell" style="left:571px;color:#1a1a1a;letter-spacing:-0.2px">2021-03-10 16:54:...</div>
</div>
<div class="ab" style="left:1162px;top:186px;width:15px;height:440px;background:#ececec"></div>
<div class="ab" style="left:1162px;top:234px;width:15px;height:375px;background:#c9c9c9"></div>
<svg class="ab" style="left:1165px;top:191px" width="9" height="8" viewBox="0 0 9 8"><path d="M1 6.2L4.5 2.6L8 6.2" fill="none" stroke="#3a3a3a" stroke-width="2.2"/></svg>
<div class="ab" style="left:1162px;top:609px;width:15px;height:17px;background:#f2f2f2"></div>
<svg class="ab" style="left:1165px;top:614px" width="9" height="8" viewBox="0 0 9 8"><path d="M1 1.6L4.5 5.2L8 1.6" fill="none" stroke="#3a3a3a" stroke-width="2.2"/></svg>
<div class="ab" style="left:293px;top:626px;width:885px;height:1px;background:#c8c8c8"></div>
<div class="ab" style="left:711px;top:628px;width:50px;height:7px;background:#dfe4ea;border:1px solid #b0b8c2"></div>
<svg class="ab" style="left:730px;top:629px" width="12" height="5" viewBox="0 0 12 5"><path d="M0 0H12L6 5Z" fill="#111"/></svg>
<div class="ab" style="left:299px;top:637px;width:140px;height:134px;background:#f8fbff;border:1px solid #d4d8dc"></div>
<svg class="ab" style="left:304px;top:659px" width="129" height="86" viewBox="0 0 129 86">
<defs>
<linearGradient id="sky" x1="0" y1="0" x2="1" y2="0"><stop offset="0" stop-color="#f4f6f4"/><stop offset="0.55" stop-color="#ffffff"/><stop offset="0.8" stop-color="#d8e8f4"/><stop offset="1" stop-color="#9ccaee"/></linearGradient>
<linearGradient id="hill" x1="0" y1="0" x2="1" y2="0.5"><stop offset="0" stop-color="#2c322e"/><stop offset="0.45" stop-color="#3e4440"/><stop offset="0.8" stop-color="#7a807a"/><stop offset="1" stop-color="#c0c4c0"/></linearGradient>
<linearGradient id="mtn" x1="0" y1="0" x2="1" y2="0"><stop offset="0" stop-color="#d8dce0"/><stop offset="1" stop-color="#8c96a2"/></linearGradient>
<linearGradient id="fld" x1="0" y1="0" x2="1" y2="0"><stop offset="0" stop-color="#8a8a58"/><stop offset="0.6" stop-color="#c4b47c"/><stop offset="1" stop-color="#a89868"/></linearGradient>
<radialGradient id="sun" cx="0.56" cy="0.12" r="0.42"><stop offset="0" stop-color="#fff" stop-opacity="1"/><stop offset="0.3" stop-color="#fff" stop-opacity="0.6"/><stop offset="1" stop-color="#fff" stop-opacity="0"/></radialGradient>
<clipPath id="pc"><rect width="129" height="86"/></clipPath>
<filter id="bl" x="-0.1" y="-0.1" width="1.2" height="1.2"><feGaussianBlur stdDeviation="0.9"/></filter>
</defs>
<g clip-path="url(#pc)"><g filter="url(#bl)">
<rect x="-5" y="-5" width="140" height="100" fill="url(#sky)"/>
<path d="M76 18 L92 15 L110 14 L129 12 V30 L92 33 L78 30Z" fill="url(#mtn)"/>
<path d="M-5 -5 L33 -5 L33 0 L45 3 L55 7 L62 12 L70 18 L78 25 L86 31 L40 33 L-5 32Z" fill="url(#hill)"/>
<path d="M-5 30 L40 32 L86 30 L100 27 L135 24 V90 H-5Z" fill="url(#fld)"/>
<path d="M92 31 L135 24 V40 L104 43 L94 38Z" fill="#4e503e"/>
<path d="M-5 31 L30 32 L48 36 L40 42 L-5 44Z" fill="#545a4a"/>
<path d="M10 34 L16 33 L17 36 L11 37Z M22 35 L28 34 L28 37 L23 37Z" fill="#c8ccc8"/>
<path d="M-5 44 L35 38 L52 40 L44 48 L-5 54Z" fill="#727a40"/>
<path d="M-5 52 L20 47 L22 50 L-5 56Z" fill="#3e4428"/>
<path d="M-5 56 L40 48 L36 62 L-5 68Z" fill="#7a8444"/>
<path d="M30 52 L48 44 L52 46 L34 58Z" fill="#434a2c"/>
<path d="M36 56 L52 48 L70 50 L84 56 L82 90 L30 90 Z" fill="#5c5840"/>
<path d="M56 58 L64 57 L66 90 L54 90Z" fill="#6a6648" opacity="0.7"/>
<path d="M-5 68 L36 62 L34 90 H-5Z" fill="#575a34"/>
<path d="M-5 76 L28 72 L26 90 H-5Z" fill="#3e3a2a"/>
<path d="M80 54 L108 48 L135 46 V90 H84Z" fill="#7a8a44"/>
<path d="M96 64 L135 58 V90 H96Z" fill="#8a9a4e"/>
<path d="M84 70 L100 66 L102 90 H86Z" fill="#56663a"/>
<rect x="-5" y="45" width="140" height="50" fill="#2a2a18" opacity="0.12"/>
<rect x="-5" y="-5" width="140" height="100" fill="url(#sun)"/>
</g></g>
</svg>
<div class="hex" style="top:642px"><span class="hb" style="width:36.8px;letter-spacing:0.6px">0000:</span><span class="hb">FF</span><span class="hb">D8</span><span class="hb">FF</span><span class="hb">E1</span><span class="hb">52</span><span class="hb">D8</span><span class="hb">45</span><span class="hb">78</span><span class="hb">69</span><span class="hb">66</span><span class="hb">00</span><span class="hb">00</span><span class="hb">49</span><span class="hb">49</span><span class="hb">2A</span><span class="hb">00</span></div>
<div class="hex" style="top:642px;left:776px;letter-spacing:0.45px">....R.Exif..II*.</div>
<div class="hex" style="top:656px"><span class="hb" style="width:36.8px;letter-spacing:0.6px">0010:</span><span class="hb">08</span><span class="hb">00</span><span class="hb">00</span><span class="hb">00</span><span class="hb">0C</span><span class="hb">00</span><span class="hb">0F</span><span class="hb">01</span><span class="hb">02</span><span class="hb">00</span><span class="hb">06</span><span class="hb">00</span><span class="hb">00</span><span class="hb">00</span><span class="hb">9E</span><span class="hb">00</span></div>
<div class="hex" style="top:656px;left:776px;letter-spacing:0.45px">................</div>
<div class="hex" style="top:670px"><span class="hb" style="width:36.8px;letter-spacing:0.6px">0020:</span><span class="hb">00</span><span class="hb">00</span><span class="hb">10</span><span class="hb">01</span><span class="hb">02</span><span class="hb">00</span><span class="hb">16</span><span class="hb">00</span><span class="hb">00</span><span class="hb">00</span><span class="hb">A4</span><span class="hb">00</span><span class="hb">00</span><span class="hb">00</span><span class="hb">12</span><span class="hb">01</span></div>
<div class="hex" style="top:670px;left:776px;letter-spacing:0.45px">................</div>
<div class="hex" style="top:684px"><span class="hb" style="width:36.8px;letter-spacing:0.6px">0030:</span><span class="hb">03</span><span class="hb">00</span><span class="hb">01</span><span class="hb">00</span><span class="hb">00</span><span class="hb">00</span><span class="hb">01</span><span class="hb">00</span><span class="hb">00</span><span class="hb">00</span><span class="hb">1A</span><span class="hb">01</span><span class="hb">05</span><span class="hb">00</span><span class="hb">01</span><span class="hb">00</span></div>
<div class="hex" style="top:684px;left:776px;letter-spacing:0.45px">................</div>
<div class="hex" style="top:698px"><span class="hb" style="width:36.8px;letter-spacing:0.6px">0040:</span><span class="hb">00</span><span class="hb">00</span><span class="hb">C4</span><span class="hb">00</span><span class="hb">00</span><span class="hb">00</span><span class="hb">1B</span><span class="hb">01</span><span class="hb">05</span><span class="hb">00</span><span class="hb">01</span><span class="hb">00</span><span class="hb">00</span><span class="hb">00</span><span class="hb">CC</span><span class="hb">00</span></div>
<div class="hex" style="top:698px;left:776px;letter-spacing:0.45px">................</div>
<div class="hex" style="top:712px"><span class="hb" style="width:36.8px;letter-spacing:0.6px">0050:</span><span class="hb">00</span><span class="hb">00</span><span class="hb">28</span><span class="hb">01</span><span class="hb">03</span><span class="hb">00</span><span class="hb">01</span><span class="hb">00</span><span class="hb">00</span><span class="hb">00</span><span class="hb">02</span><span class="hb">00</span><span class="hb">00</span><span class="hb">00</span><span class="hb">32</span><span class="hb">01</span></div>
<div class="hex" style="top:712px;left:776px;letter-spacing:0.45px">..(...........2.</div>
<div class="hex" style="top:726px"><span class="hb" style="width:36.8px;letter-spacing:0.6px">0060:</span><span class="hb">02</span><span class="hb">00</span><span class="hb">14</span><span class="hb">00</span><span class="hb">00</span><span class="hb">00</span><span class="hb">D4</span><span class="hb">00</span><span class="hb">00</span><span class="hb">00</span><span class="hb">3B</span><span class="hb">01</span><span class="hb">02</span><span class="hb">00</span><span class="hb">08</span><span class="hb">00</span></div>
<div class="hex" style="top:726px;left:776px;letter-spacing:0.45px">..........;.....</div>
<div class="hex" style="top:740px"><span class="hb" style="width:36.8px;letter-spacing:0.6px">0070:</span><span class="hb">00</span><span class="hb">00</span><span class="hb">E8</span><span class="hb">00</span><span class="hb">00</span><span class="hb">00</span><span class="hb">13</span><span class="hb">02</span><span class="hb">03</span><span class="hb">00</span><span class="hb">01</span><span class="hb">00</span><span class="hb">00</span><span class="hb">00</span><span class="hb">02</span><span class="hb">00</span></div>
<div class="hex" style="top:740px;left:776px;letter-spacing:0.45px">................</div>
<div class="hex" style="top:754px"><span class="hb" style="width:36.8px;letter-spacing:0.6px">0080:</span><span class="hb">00</span><span class="hb">00</span><span class="hb">98</span><span class="hb">82</span><span class="hb">02</span><span class="hb">00</span><span class="hb">01</span><span class="hb">00</span><span class="hb">00</span><span class="hb">00</span><span class="hb">00</span><span class="hb">00</span><span class="hb">00</span><span class="hb">00</span><span class="hb">69</span><span class="hb">87</span></div>
<div class="hex" style="top:754px;left:776px;letter-spacing:0.45px">..............i.</div>
<div class="hex" style="top:768px"><span class="hb" style="width:36.8px;letter-spacing:0.6px">0090:</span><span class="hb">04</span><span class="hb">00</span><span class="hb">01</span><span class="hb">00</span><span class="hb">00</span><span class="hb">00</span><span class="hb">68</span><span class="hb">01</span><span class="hb">00</span><span class="hb">00</span><span class="hb">25</span><span class="hb">88</span><span class="hb">04</span><span class="hb">00</span><span class="hb">01</span><span class="hb">00</span></div>
<div class="hex" style="top:768px;left:776px;letter-spacing:0.45px">......h...%.....</div>
<div class="ab" style="left:1px;top:780px;width:1177px;height:1px;background:#c8cacc"></div>
<div class="t" style="left:5px;top:784px;font-size:13px;word-spacing:0.3px"><span class="c">已选择</span>: 0 B / 0 <span class="c">个文件</span></div>
<div class="t" style="left:267px;top:784px;font-size:13px;word-spacing:1.5px"><span class="c">当前文件夹</span><span style="margin-left:1px">:</span></div>
<div class="t" style="left:340px;top:784px;font-size:13px;word-spacing:1px;letter-spacing:-0.2px">92.3MB / 25 <span class="c" style="letter-spacing:0">个文件</span></div>
<div class="ab" style="left:16px;top:806px;width:96px;height:27px;background:#f0f0f0;border:1px solid #c4c4c4;border-radius:3px;color:#777;font-size:13px;line-height:25px;text-align:center">保存扫描进度</div>
<div class="btnb" style="left:939px;top:806px;width:70px;height:27px;line-height:25px;background:#2aa0e0;border-color:#2196d6">主菜单</div>
<div class="btnb" style="left:1019px;top:806px;width:70px;height:27px;line-height:25px;background:#2aa0e0;border-color:#2196d6">上一步</div>
<div class="ab" style="left:1099px;top:806px;width:70px;height:27px;background:#f0f0f0;border:1px solid #c8c8c8;border-radius:3px;color:#999;font-size:14px;line-height:25px;text-align:center">恢复</div>
<div class="ab" style="left:0;top:842px;width:1180px;height:38px;background:#299bd2"></div>
<div class="t" style="left:12px;top:852px;font-size:13px;line-height:20px;color:#e6f6ff">数据恢复精灵 - 分区及文件数据恢复</div>
<div class="ab" style="left:445px;top:852px;width:93px;height:20px;background:#f6fafd;border:1px solid #d8e6ee"></div>
<svg class="ab" style="left:448px;top:853px" width="15" height="18" viewBox="0 0 15 18"><path d="M7.5 0.8 C3.5 0.8 3 4.5 3 7 C1.5 9 0.5 11.5 1.5 13 C2.5 12.5 3 12 3 12 C3.5 15 5.5 16 7.5 16 C9.5 16 11.5 15 12 12 C12 12 12.5 12.5 13.5 13 C14.5 11.5 13.5 9 12 7 C12 4.5 11.5 0.8 7.5 0.8Z" fill="#151515"/><ellipse cx="7.5" cy="12" rx="3.8" ry="3.6" fill="#fff"/><ellipse cx="5.8" cy="5" rx="1.1" ry="1.5" fill="#fff"/><ellipse cx="9.2" cy="5" rx="1.1" ry="1.5" fill="#fff"/><ellipse cx="7.5" cy="7.3" rx="2.2" ry="1" fill="#f0b020"/><path d="M3 8.6 Q7.5 10.6 12 8.6 L12 10 Q7.5 12 3 10Z" fill="#e02818"/><path d="M10 9.5 L11.5 13 L9.5 12.5Z" fill="#e02818"/><ellipse cx="4.5" cy="16.3" rx="3" ry="1.3" fill="#f0a818"/><ellipse cx="10.5" cy="16.3" rx="3" ry="1.3" fill="#f0a818"/></svg>
<div class="t" style="left:465px;top:853px;font-size:13px;line-height:18px;font-weight:bold;color:#2e6b9c;letter-spacing:-0.4px">客服QQ在线</div>
<div class="t" style="left:860px;top:852px;font-size:13px;line-height:20px;color:#e6f6ff">版本</div>
<div class="t" style="left:888px;top:852px;font-size:13px;line-height:20px;color:#e6f6ff">:</div>
<div class="t" style="left:899px;top:852px;font-size:13px;line-height:20px;color:#e6f6ff">4.5.0.460 x64</div>
<div class="t" style="left:991px;top:852px;font-size:13px;line-height:20px;color:#e6f6ff">立即注册</div>
<svg class="ab" style="left:1068px;top:851px" width="20" height="20" viewBox="0 0 20 20"><path d="M1 2H4L6 13H16L18 5H6" fill="none" stroke="#c8f03a" stroke-width="2"/><circle cx="7" cy="17" r="1.6" fill="#c8f03a"/><circle cx="15" cy="17" r="1.6" fill="#c8f03a"/></svg>
<div class="t" style="left:1096px;top:852px;font-size:13px;line-height:20px;color:#c8f03a">立即购买</div>
<div class="t" style="left:937px;top:815px;font-size:30px;line-height:44px;font-weight:normal;-webkit-text-stroke:0.9px #fff;color:#fff;letter-spacing:-0.8px;text-shadow:2px 2px 0 #000,2.5px 2.5px 1px rgba(0,0,0,0.7)">头条 <span style="font-size:33px;-webkit-text-stroke:0.6px #fff;letter-spacing:0">@</span>易数科技</div>
</body></html>
